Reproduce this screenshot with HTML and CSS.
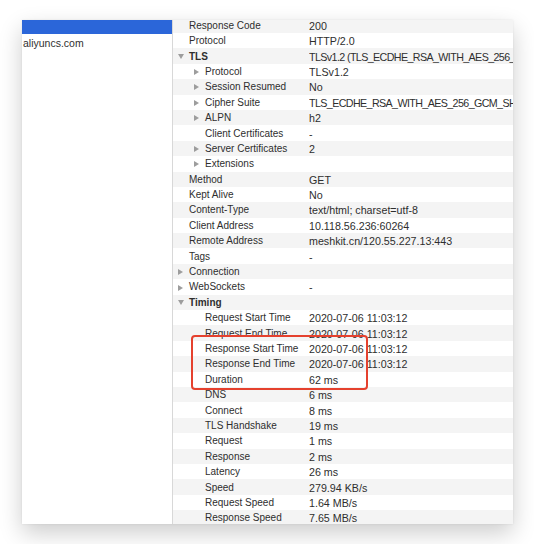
FILE: index.html
```html
<!DOCTYPE html>
<html>
<head>
<meta charset="utf-8">
<link rel="stylesheet" href="styles.css">
</head>
<body>
<div class="window">
  <div class="sidebar">
    <div class="side-row selected"></div>
    <div class="side-row">aliyuncs.com</div>
  </div>
  <div class="detail">
    <div class="rows">
      <div class="row"><div class="label lv0"><span class="slot"></span>Response Code</div><div class="value">200</div></div>
      <div class="row"><div class="label lv0"><span class="slot"></span>Protocol</div><div class="value">HTTP/2.0</div></div>
      <div class="row"><div class="label lv0 bold"><span class="slot"><svg class="down" viewBox="0 0 6 5"><path d="M0 0H6L3 5Z"/></svg></span>TLS</div><div class="value tight">TLSv1.2 (TLS_ECDHE_RSA_WITH_AES_256_GCM_SHA384)</div></div>
      <div class="row"><div class="label lv1"><span class="slot"><svg class="right" viewBox="0 0 5 6"><path d="M0 0L5 3L0 6Z"/></svg></span>Protocol</div><div class="value">TLSv1.2</div></div>
      <div class="row"><div class="label lv1"><span class="slot"><svg class="right" viewBox="0 0 5 6"><path d="M0 0L5 3L0 6Z"/></svg></span>Session Resumed</div><div class="value">No</div></div>
      <div class="row"><div class="label lv1"><span class="slot"><svg class="right" viewBox="0 0 5 6"><path d="M0 0L5 3L0 6Z"/></svg></span>Cipher Suite</div><div class="value tight">TLS_ECDHE_RSA_WITH_AES_256_GCM_SHA384</div></div>
      <div class="row"><div class="label lv1"><span class="slot"><svg class="right" viewBox="0 0 5 6"><path d="M0 0L5 3L0 6Z"/></svg></span>ALPN</div><div class="value">h2</div></div>
      <div class="row"><div class="label lv1"><span class="slot"></span>Client Certificates</div><div class="value">-</div></div>
      <div class="row"><div class="label lv1"><span class="slot"><svg class="right" viewBox="0 0 5 6"><path d="M0 0L5 3L0 6Z"/></svg></span>Server Certificates</div><div class="value">2</div></div>
      <div class="row"><div class="label lv1"><span class="slot"><svg class="right" viewBox="0 0 5 6"><path d="M0 0L5 3L0 6Z"/></svg></span>Extensions</div><div class="value"></div></div>
      <div class="row"><div class="label lv0"><span class="slot"></span>Method</div><div class="value">GET</div></div>
      <div class="row"><div class="label lv0"><span class="slot"></span>Kept Alive</div><div class="value">No</div></div>
      <div class="row"><div class="label lv0"><span class="slot"></span>Content-Type</div><div class="value">text/html; charset=utf-8</div></div>
      <div class="row"><div class="label lv0"><span class="slot"></span>Client Address</div><div class="value">10.118.56.236:60264</div></div>
      <div class="row"><div class="label lv0"><span class="slot"></span>Remote Address</div><div class="value">meshkit.cn/120.55.227.13:443</div></div>
      <div class="row"><div class="label lv0"><span class="slot"></span>Tags</div><div class="value">-</div></div>
      <div class="row"><div class="label lv0"><span class="slot"><svg class="right" viewBox="0 0 5 6"><path d="M0 0L5 3L0 6Z"/></svg></span>Connection</div><div class="value"></div></div>
      <div class="row"><div class="label lv0"><span class="slot"><svg class="right" viewBox="0 0 5 6"><path d="M0 0L5 3L0 6Z"/></svg></span>WebSockets</div><div class="value">-</div></div>
      <div class="row"><div class="label lv0 bold"><span class="slot"><svg class="down" viewBox="0 0 6 5"><path d="M0 0H6L3 5Z"/></svg></span>Timing</div><div class="value"></div></div>
      <div class="row"><div class="label lv1"><span class="slot"></span>Request Start Time</div><div class="value">2020-07-06 11:03:12</div></div>
      <div class="row"><div class="label lv1"><span class="slot"></span>Request End Time</div><div class="value">2020-07-06 11:03:12</div></div>
      <div class="row"><div class="label lv1"><span class="slot"></span>Response Start Time</div><div class="value">2020-07-06 11:03:12</div></div>
      <div class="row"><div class="label lv1"><span class="slot"></span>Response End Time</div><div class="value">2020-07-06 11:03:12</div></div>
      <div class="row"><div class="label lv1"><span class="slot"></span>Duration</div><div class="value">62 ms</div></div>
      <div class="row"><div class="label lv1"><span class="slot"></span>DNS</div><div class="value">6 ms</div></div>
      <div class="row"><div class="label lv1"><span class="slot"></span>Connect</div><div class="value">8 ms</div></div>
      <div class="row"><div class="label lv1"><span class="slot"></span>TLS Handshake</div><div class="value">19 ms</div></div>
      <div class="row"><div class="label lv1"><span class="slot"></span>Request</div><div class="value">1 ms</div></div>
      <div class="row"><div class="label lv1"><span class="slot"></span>Response</div><div class="value">2 ms</div></div>
      <div class="row"><div class="label lv1"><span class="slot"></span>Latency</div><div class="value">26 ms</div></div>
      <div class="row"><div class="label lv1"><span class="slot"></span>Speed</div><div class="value">279.94 KB/s</div></div>
      <div class="row"><div class="label lv1"><span class="slot"></span>Request Speed</div><div class="value">1.64 MB/s</div></div>
      <div class="row"><div class="label lv1"><span class="slot"></span>Response Speed</div><div class="value">7.65 MB/s</div></div>
    </div>
    <div class="highlight"></div>
  </div>
</div>
</body>
</html>
```

FILE: styles.css
```css
html, body {
  margin: 0;
  padding: 0;
  background: #ffffff;
}

body {
  width: 534px;
  height: 544px;
  overflow: hidden;
  font-family: "Liberation Sans", Arial, sans-serif;
  color: #2f2f2f;
}

.window {
  display: flex;
  width: 491px;
  height: 504px;
  margin: 20px 0 0 22px;
  background: #ffffff;
  box-shadow: 0 9px 22px rgba(0, 0, 0, 0.2), 0 0 2px rgba(0, 0, 0, 0.08);
  overflow: hidden;
}

.sidebar {
  width: 150px;
  flex: none;
  border-right: 1px solid #d8d8d8;
  background: #ffffff;
}

.side-row {
  height: 17px;
  padding-top: 1px;
  line-height: 17px;
  font-size: 10.5px;
  padding-left: 1px;
  white-space: nowrap;
  color: #303030;
}

.side-row.selected {
  height: 14px;
  padding-top: 0;
  background: #2b66d9;
}

.detail {
  position: relative;
  flex: 1;
  overflow: hidden;
}

.rows {
  margin-top: -2.4px;
}

.row {
  display: flex;
  box-sizing: border-box;
  height: 15.4px;
  padding-top: 1.2px;
  line-height: 14.2px;
  white-space: nowrap;
}

.row:nth-child(odd) {
  background: #f4f4f4;
}

.label {
  flex: none;
  display: flex;
  align-items: center;
  font-size: 10px;
  color: #2e2e2e;
  overflow: hidden;
}

.label.lv0 {
  padding-left: 5px;
  width: 131px;
}

.label.lv1 {
  padding-left: 21px;
  width: 115px;
}

.label.bold {
  font-weight: bold;
}

.slot {
  width: 11px;
  flex: none;
  display: flex;
  align-items: center;
}

.slot svg {
  fill: #9d9d9d;
  display: block;
}

.slot .right {
  width: 5px;
  height: 6px;
}

.slot .down {
  width: 6px;
  height: 5px;
}

.value {
  flex: 1;
  font-size: 10.7px;
  color: #2e2e2e;
  overflow: hidden;
}

.value.tight {
  letter-spacing: -0.6px;
}

.highlight {
  position: absolute;
  left: 18px;
  top: 314.5px;
  width: 177px;
  height: 55px;
  box-sizing: border-box;
  border: 2px solid #e5412e;
  border-radius: 4px;
}
```
